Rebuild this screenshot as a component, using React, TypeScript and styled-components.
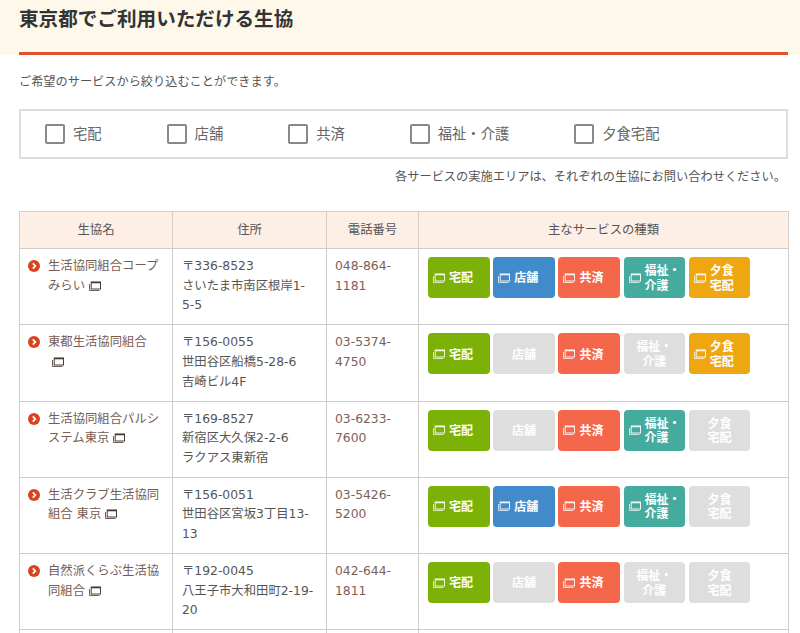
import React from 'react';
import styled, { createGlobalStyle } from 'styled-components';

type Kind = 'home' | 'store' | 'mutual' | 'care' | 'meal';

type Coop = {
  name: string,
  zip: string,
  address: React.ReactNode,
  phone: string,
  services: Kind[],
};

const SERVICES: { kind: Kind, label: React.ReactNode, color: string }[] = [
  { kind: 'home', label: '宅配', color: '#7cb107' },
  { kind: 'store', label: '店舗', color: '#428bca' },
  { kind: 'mutual', label: '共済', color: '#f4674a' },
  { kind: 'care', label: <>福祉・<br />介護</>, color: '#45ab9f' },
  { kind: 'meal', label: <>夕食<br />宅配</>, color: '#eea711' },
];

const COOPS: Coop[] = [
  {
    name: '生活協同組合コープみらい',
    zip: '〒336-8523',
    address: 'さいたま市南区根岸1-5-5',
    phone: '048-864-1181',
    services: ['home', 'store', 'mutual', 'care', 'meal'],
  },
  {
    name: '東都生活協同組合',
    zip: '〒156-0055',
    address: <>世田谷区船橋5-28-6<br />吉崎ビル4F</>,
    phone: '03-5374-4750',
    services: ['home', 'mutual', 'meal'],
  },
  {
    name: '生活協同組合パルシステム東京',
    zip: '〒169-8527',
    address: <>新宿区大久保2-2-6<br />ラクアス東新宿</>,
    phone: '03-6233-7600',
    services: ['home', 'mutual', 'care'],
  },
  {
    name: '生活クラブ生活協同組合 東京',
    zip: '〒156-0051',
    address: '世田谷区宮坂3丁目13-13',
    phone: '03-5426-5200',
    services: ['home', 'store', 'mutual', 'care'],
  },
  {
    name: '自然派くらぶ生活協同組合',
    zip: '〒192-0045',
    address: '八王子市大和田町2-19-20',
    phone: '042-644-1811',
    services: ['home', 'mutual'],
  },
];

const FILTERS = ['宅配', '店舗', '共済', '福祉・介護', '夕食宅配'];

const WindowIcon = ({ className }: { className?: string }) => (
  <svg className={className} viewBox="0 0 12 10" fill="none" stroke="currentColor">
    <path d="M0.5 3V9.5H10.5" strokeWidth="0.8" />
    <rect x="2.2" y="1" width="9.3" height="7" strokeWidth="1" />
    <path d="M2.2 1.6H11.5" strokeWidth="1.4" />
  </svg>
);

const App = () => {
  return (
    <Page>
      <GlobalStyle />
      <Banner>
        <Title>東京都でご利用いただける生協</Title>
      </Banner>
      <Content>
        <Lead>ご希望のサービスから絞り込むことができます。</Lead>
        <FilterBox>
          {FILTERS.map((label) => (
            <FilterItem key={label}>
              <CheckBox />
              <FilterText>{label}</FilterText>
            </FilterItem>
          ))}
        </FilterBox>
        <Note>各サービスの実施エリアは、それぞれの生協にお問い合わせください。</Note>
        <Table>
          <colgroup>
            <col width="153" />
            <col width="154" />
            <col width="92" />
            <col width="370" />
          </colgroup>
          <thead>
            <tr>
              <HeadCell>生協名</HeadCell>
              <HeadCell>住所</HeadCell>
              <HeadCell>電話番号</HeadCell>
              <HeadCell>主なサービスの種類</HeadCell>
            </tr>
          </thead>
          <tbody>
            {COOPS.map((coop) => (
              <tr key={coop.zip}>
                <NameCell>
                  <Bullet>
                    <svg viewBox="0 0 12 12" fill="none" stroke="#fff" strokeWidth="1.8">
                      <path d="M4.8 3.4L7.3 6L4.8 8.6" />
                    </svg>
                  </Bullet>
                  {coop.name}
                  <NameIcon />
                </NameCell>
                <AddressCell>
                  {coop.zip}
                  <br />
                  {coop.address}
                </AddressCell>
                <PhoneCell>{coop.phone}</PhoneCell>
                <ServiceCell>
                  <ServiceList>
                    {SERVICES.map((service) => {
                      const active = coop.services.includes(service.kind);
                      return (
                        <ServiceButton key={service.kind} $color={active ? service.color : '#dedede'} $active={active}>
                          {active && <ServiceIcon />}
                          <ServiceLabel $active={active}>{service.label}</ServiceLabel>
                        </ServiceButton>
                      );
                    })}
                  </ServiceList>
                </ServiceCell>
              </tr>
            ))}
            <tr>
              <EmptyCell />
              <EmptyCell />
              <EmptyCell />
              <EmptyCell />
            </tr>
          </tbody>
        </Table>
      </Content>
    </Page>
  );
};

const GlobalStyle = createGlobalStyle`
  html, body {
    margin: 0;
    padding: 0;
    background: #ffffff;
    overflow: hidden;
  }
  body {
    font-family: "DejaVu Sans", "Noto Sans CJK JP", sans-serif;
    font-size: 12.35px;
    color: #555555;
  }
`;

const Page = styled.div`
  width: 800px;
  height: 633px;
  overflow: hidden;
`;

const Banner = styled.div`
  height: 55px;
  padding: 0 12px 0 19px;
  background: #fdf8e9;
`;

const Title = styled.h2`
  margin: 0;
  height: 55px;
  padding-top: 4px;
  box-sizing: border-box;
  border-bottom: 3px solid #e2502f;
  font-size: 19.6px;
  line-height: 28px;
  font-weight: 700;
  color: #333333;
  font-family: "Noto Sans CJK JP", sans-serif;
`;

const Content = styled.div`
  padding: 0 12px 0 19px;
`;

const Lead = styled.p`
  margin: 0;
  padding-top: 17px;
  line-height: 20px;
  font-size: 12.2px;
`;

const FilterBox = styled.div`
  display: flex;
  align-items: center;
  gap: 65px;
  box-sizing: border-box;
  height: 50px;
  margin-top: 17px;
  padding-left: 24px;
  border: 2px solid #dddddd;
`;

const FilterItem = styled.label`
  display: flex;
  align-items: center;
  gap: 8px;
  font-size: 14.3px;
  color: #666666;
`;

const FilterText = styled.span`
  padding-bottom: 4px;
`;

const CheckBox = styled.span`
  box-sizing: border-box;
  width: 20px;
  height: 20px;
  background: #ffffff;
  border: 2px solid #888888;
  border-radius: 2px;
`;

const Note = styled.p`
  margin: 0;
  padding: 8px 2px 0 0;
  line-height: 20px;
  font-size: 12.22px;
  text-align: right;
`;

const Table = styled.table`
  width: 769px;
  margin-top: 24px;
  table-layout: fixed;
  border-collapse: collapse;
`;

const HeadCell = styled.th`
  box-sizing: border-box;
  height: 37px;
  padding: 0 0 2px;
  background: #fdeee6;
  border: 1px solid #d6cdc8;
  font-size: 12.35px;
  font-weight: 400;
  color: #555555;
  text-align: center;
`;

const Cell = styled.td`
  box-sizing: border-box;
  height: 76.25px;
  padding: 8px 8px 7px 9px;
  border: 1px solid #cccccc;
  line-height: 19.7px;
  vertical-align: top;
  color: #555555;
`;

const NameCell = styled(Cell)`
  position: relative;
  padding: 8px 11px 7px 28px;
  color: #775c55;
`;

const AddressCell = styled(Cell)`
  padding-right: 12.5px;
`;

const PhoneCell = styled(Cell)`
  padding-left: 8px;
  color: #7d6058;
`;

const ServiceCell = styled(Cell)`
  padding: 8px 9px;
`;

const EmptyCell = styled.td`
  height: 20px;
  padding: 0;
  border: 1px solid #cccccc;
`;

const Bullet = styled.span`
  position: absolute;
  left: 8px;
  top: 11px;
  width: 12px;
  height: 12px;
  border-radius: 50%;
  background: #d9431e;

  svg {
    display: block;
    width: 12px;
    height: 12px;
  }
`;

const NameIcon = styled(WindowIcon)`
  display: inline-block;
  width: 12px;
  height: 10px;
  margin-left: 4px;
  color: #4a3a36;
  vertical-align: -1px;
`;

const ServiceList = styled.div`
  display: flex;
  gap: 3.7px;
`;

const ServiceButton = styled.div<{ $color: string, $active: boolean }>`
  display: flex;
  align-items: center;
  justify-content: ${({ $active }) => ($active ? 'flex-start' : 'center')};
  gap: 4px;
  box-sizing: border-box;
  width: 61.5px;
  height: 41px;
  padding-left: ${({ $active }) => ($active ? '5px' : '0')};
  background: ${({ $color }) => $color};
  border-radius: 4px;
  color: #ffffff;
`;

const ServiceIcon = styled(WindowIcon)`
  flex: none;
  width: 12px;
  height: 10px;
  color: #ffffff;
  opacity: 0.9;
`;

const ServiceLabel = styled.div<{ $active: boolean }>`
  text-align: ${({ $active }) => ($active ? 'left' : 'center')};
  font-family: "Noto Sans CJK JP", sans-serif;
  font-size: 12px;
  font-weight: 700;
  line-height: 14.5px;
`;

export default App;
